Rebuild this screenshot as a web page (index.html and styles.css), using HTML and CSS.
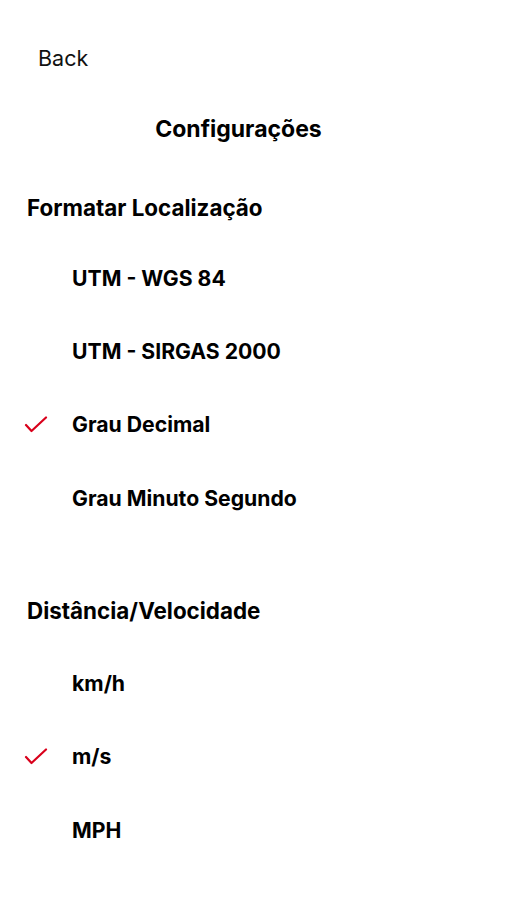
FILE: index.html
```html
<!DOCTYPE html>
<html lang="pt">
<head>
<meta charset="utf-8">
<title>Configurações</title>
<link rel="stylesheet" href="styles.css">
</head>
<body>
<div class="screen">
  <div class="nav"><span class="back">Back</span></div>
  <h1 class="title">Configurações</h1>

  <section class="group first">
    <h2 class="group-title">Formatar Localização</h2>
    <ul class="options">
      <li class="option"><span class="check"></span><span class="label">UTM - WGS 84</span></li>
      <li class="option"><span class="check"></span><span class="label">UTM - SIRGAS 2000</span></li>
      <li class="option selected"><span class="check"><svg viewBox="0 0 24 20" width="24" height="20"><polyline points="2,9 7.5,15 22,1.5" fill="none" stroke="#d9001b" stroke-width="2.2" stroke-linecap="round" stroke-linejoin="round"/></svg></span><span class="label">Grau Decimal</span></li>
      <li class="option"><span class="check"></span><span class="label">Grau Minuto Segundo</span></li>
    </ul>
  </section>

  <section class="group second">
    <h2 class="group-title">Distância/Velocidade</h2>
    <ul class="options">
      <li class="option"><span class="check"></span><span class="label">km/h</span></li>
      <li class="option selected"><span class="check"><svg viewBox="0 0 24 20" width="24" height="20"><polyline points="2,9 7.5,15 22,1.5" fill="none" stroke="#d9001b" stroke-width="2.2" stroke-linecap="round" stroke-linejoin="round"/></svg></span><span class="label">m/s</span></li>
      <li class="option"><span class="check"></span><span class="label">MPH</span></li>
    </ul>
  </section>
</div>
</body>
</html>
```

FILE: styles.css
```css
html, body {
  margin: 0;
  padding: 0;
  background: #ffffff;
}

body {
  font-family: Inter, "Liberation Sans", Arial, sans-serif;
  color: #000000;
}

.screen {
  width: 507px;
}

.nav {
  padding: 46px 0 0 38px;
  height: 24px;
}

.back {
  font-size: 21.5px;
  line-height: 24px;
  font-weight: 400;
  color: #111111;
}

.title {
  margin: 47px 0 0 0;
  padding-right: 30px;
  text-align: center;
  font-size: 23px;
  line-height: 24px;
  font-weight: 700;
}

.group-title {
  margin: 0;
  padding-left: 27px;
  font-size: 22.4px;
  line-height: 24px;
  font-weight: 700;
}

.group.first {
  margin-top: 55px;
}

.group.second {
  margin-top: 65px;
}

.options {
  list-style: none;
  margin: 21px 0 0 0;
  padding: 0;
}

.group.second .options {
  margin-top: 23px;
}

.option {
  display: flex;
  align-items: center;
  height: 73.33px;
}

.check {
  width: 72px;
  display: flex;
  align-items: center;
  padding-left: 24px;
  box-sizing: border-box;
}

.check svg {
  display: block;
  margin-top: 4px;
}

.label {
  font-size: 21.2px;
  line-height: 24px;
  font-weight: 700;
}
```
